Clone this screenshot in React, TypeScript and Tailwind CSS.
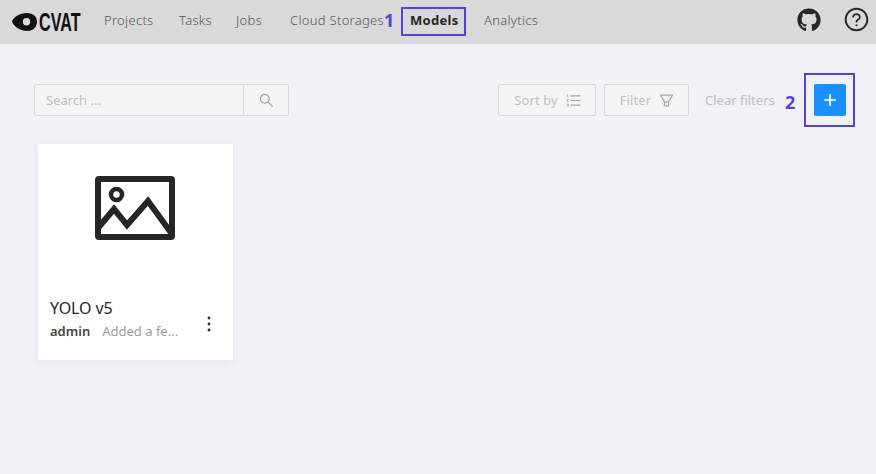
import { FaGithub } from "react-icons/fa";
import {
  AiOutlineFilter,
  AiOutlineOrderedList,
  AiOutlinePlus,
  AiOutlineQuestionCircle,
  AiOutlineSearch,
} from "react-icons/ai";

const navItems = [
  { label: "Projects", width: "w-[75px]" },
  { label: "Tasks", width: "w-[57px]" },
  { label: "Jobs", width: "w-[54px]" },
  { label: "Cloud Storages", width: "w-[120px]" },
  { label: "Models", width: "w-[74px]", active: true },
  { label: "Analytics", width: "w-[60px]" },
];

function Logo() {
  return (
    <div className="flex items-center gap-[2px]">
      <svg width="25" height="18" viewBox="0 0 25 18">
        <path
          fillRule="evenodd"
          fill="#111"
          d="M0 8.5C1.5 4 8 0 15 0 21 0 25 3.5 25 8.5 25 14 21 18 15.5 18 8.5 18 1.5 13.5 0 8.5ZM14.5 5A3.7 3.7 0 1 0 14.5 12.4 3.7 3.7 0 1 0 14.5 5Z"
        />
      </svg>
      <span className="font-['Liberation_Sans',sans-serif] text-[26px] font-bold leading-none text-[#111] inline-block w-[41px] origin-left scale-x-[0.62]">
        CVAT
      </span>
    </div>
  );
}

function PlaceholderImage() {
  return (
    <svg width="80" height="64" viewBox="0 0 80 64" fill="none" stroke="#262626" strokeWidth="6">
      <rect x="3" y="3" width="74" height="58" rx="1" />
      <circle cx="21.5" cy="18.5" r="5.5" strokeWidth="4.5" />
      <path d="M3 52 L19 33 L32 49 L53 25 L77 58" strokeLinejoin="miter" />
    </svg>
  );
}

export default function App() {
  return (
    <div className="relative h-[474px] w-[876px] overflow-hidden bg-[#f1f2f6] font-['Noto_Sans',sans-serif]">
      {/* Header */}
      <header className="flex h-[44px] items-center bg-[#d9d9d9] pl-[12px] pr-[6px]">
        <Logo />
        <nav className="ml-[24px] flex items-center pb-[2px]">
          {navItems.map((item) => (
            <span
              key={item.label}
              className={
                item.active
                  ? `${item.width} whitespace-nowrap text-[13px] font-bold tracking-[0.3px] text-[#262626]`
                  : `${item.width} whitespace-nowrap text-[13px] font-light tracking-[0.3px] text-[#555]`
              }
            >
              {item.label}
            </span>
          ))}
        </nav>
        <div className="ml-auto flex items-center gap-[22px] pb-[5px] text-[#262626]">
          <FaGithub className="text-[24px]" />
          <AiOutlineQuestionCircle className="text-[27px]" />
        </div>
      </header>

      {/* Toolbar */}
      <div className="mt-[40px] flex h-[32px] items-center pl-[34px] pr-[30px]">
        <div className="flex h-full w-[255px] rounded-[2px] border border-[#d9d9d9] bg-[#f5f5f5]">
          <span className="flex-1 pl-[11px] text-[13px] leading-[30px] text-[#bfbfbf]">Search ...</span>
          <span className="flex w-[45px] items-center justify-center border-l border-[#d9d9d9] text-[#a6a6a6]">
            <AiOutlineSearch className="text-[17px]" />
          </span>
        </div>
        <button className="ml-auto flex h-full w-[98px] items-center justify-center gap-[7px] rounded-[2px] border border-[#d9d9d9] bg-[#f5f5f5] pl-[2px] text-[13px] tracking-[0.1px] text-[#bfbfbf]">
          <span className="pt-[1px]">Sort by</span>
          <AiOutlineOrderedList className="text-[17px] text-[#a6a6a6]" />
        </button>
        <button className="ml-[8px] flex h-full w-[85px] items-center justify-center gap-[7px] rounded-[2px] border border-[#d9d9d9] bg-[#f5f5f5] pl-[2px] text-[13px] tracking-[0.1px] text-[#bfbfbf]">
          <span className="pt-[1px]">Filter</span>
          <AiOutlineFilter className="text-[17px] text-[#a6a6a6]" />
        </button>
        <span className="ml-[16px] w-[70px] whitespace-nowrap pt-[1px] text-[13px] text-[#bfbfbf]">
          Clear filters
        </span>
        <button className="ml-[39px] flex h-[32px] w-[32px] items-center justify-center rounded-[2px] bg-[#1890ff] text-white">
          <AiOutlinePlus className="text-[16px]" strokeWidth={40} />
        </button>
      </div>

      {/* Card */}
      <div className="ml-[38px] mt-[28px] flex h-[216px] w-[195px] flex-col bg-white shadow-[0_2px_8px_rgba(0,0,0,0.05)]">
        <div className="flex justify-center pr-[2px] pt-[32px]">
          <PlaceholderImage />
        </div>
        <div className="mt-[58px] flex items-center justify-between pl-[12px] pr-[22px]">
          <div>
            <div className="text-[16px] leading-[20px] tracking-[-0.1px] text-[#262626]">YOLO v5</div>
            <div className="mt-[4px] flex text-[13px] leading-[18px]">
              <span className="font-semibold text-[#444]">admin</span>
              <span className="ml-[12px] text-[#9a9a9a]">Added a fe...</span>
            </div>
          </div>
          <svg width="4" height="16" viewBox="0 0 4 16" fill="#262626" className="mt-[10px]">
            <circle cx="2" cy="2" r="1.4" />
            <circle cx="2" cy="8" r="1.4" />
            <circle cx="2" cy="14" r="1.4" />
          </svg>
        </div>
      </div>

      {/* Annotations drawn over the screenshot */}
      <div className="absolute left-[401px] top-[7px] h-[29px] w-[65px] border-2 border-[#5542d6]" />
      <div className="absolute left-[804px] top-[73px] h-[54px] w-[51px] border-2 border-[#5542d6]" />
      <span className="absolute left-[384px] top-[8px] text-[18px] font-bold leading-[24px] text-[#5542d6]">1</span>
      <span className="absolute left-[785px] top-[90px] text-[18px] font-bold leading-[24px] text-[#5542d6]">2</span>
    </div>
  );
}
